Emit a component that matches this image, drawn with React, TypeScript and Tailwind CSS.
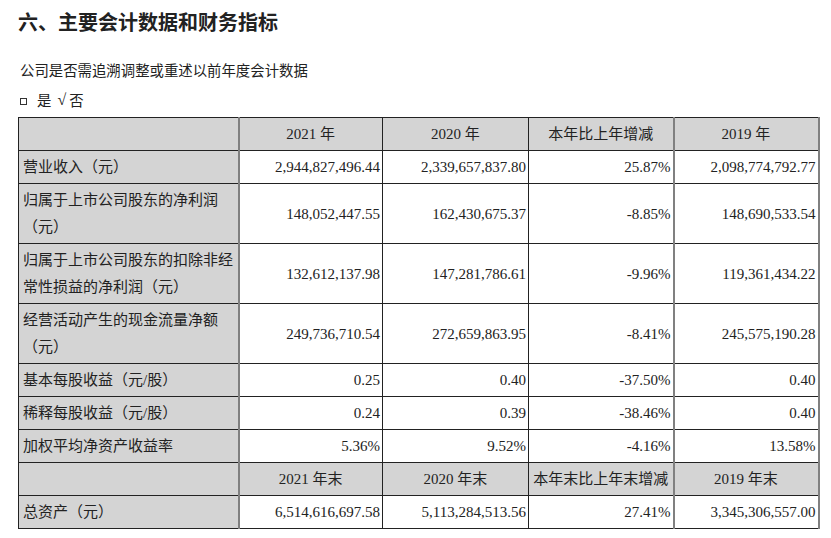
import React from "react";

type Row = {
    label: React.ReactNode
    values: string[]
    tall?: boolean
    header?: boolean
}

const rows: Row[] = [
    { label: "", values: ["2021 年", "2020 年", "本年比上年增减", "2019 年"], header: true },
    { label: "营业收入（元）", values: ["2,944,827,496.44", "2,339,657,837.80", "25.87%", "2,098,774,792.77"] },
    {
        label: <>归属于上市公司股东的净利润<br />（元）</>,
        values: ["148,052,447.55", "162,430,675.37", "-8.85%", "148,690,533.54"],
        tall: true,
    },
    {
        label: <>归属于上市公司股东的扣除非经<br />常性损益的净利润（元）</>,
        values: ["132,612,137.98", "147,281,786.61", "-9.96%", "119,361,434.22"],
        tall: true,
    },
    {
        label: <>经营活动产生的现金流量净额<br />（元）</>,
        values: ["249,736,710.54", "272,659,863.95", "-8.41%", "245,575,190.28"],
        tall: true,
    },
    { label: "基本每股收益（元/股）", values: ["0.25", "0.40", "-37.50%", "0.40"] },
    { label: "稀释每股收益（元/股）", values: ["0.24", "0.39", "-38.46%", "0.40"] },
    { label: "加权平均净资产收益率", values: ["5.36%", "9.52%", "-4.16%", "13.58%"] },
    { label: "", values: ["2021 年末", "2020 年末", "本年末比上年末增减", "2019 年末"], header: true },
    { label: "总资产（元）", values: ["6,514,616,697.58", "5,113,284,513.56", "27.41%", "3,345,306,557.00"] },
]

// which columns get the grey, heavier right rule
const greyRight = [true, false, false, true, true]

export default function App() {
    return (
        <div className="w-[831px] h-[538px] bg-white pl-[18px] text-[#222] font-['Liberation_Serif','Noto_Sans_CJK_SC',serif]">
            <h1 className="pt-[8px] text-[20px] leading-[28px] font-bold font-['Noto_Sans_CJK_SC',sans-serif]">
                六、主要会计数据和财务指标
            </h1>
            <p className="mt-[24px] pl-[2px] text-[14.4px] leading-[20px] font-['Noto_Sans_CJK_SC',sans-serif]">
                公司是否需追溯调整或重述以前年度会计数据
            </p>
            {/* 是 / 否 勾选 */}
            <div className="mt-[10px] pl-[2px] h-[20px] flex items-center text-[14.4px] font-['Noto_Sans_CJK_SC',sans-serif]">
                <span className="w-[7px] h-[7px] mt-[3px] border border-[#333]" />
                <span className="ml-[10px]">是</span>
                <span className="ml-[6px] text-[16px] leading-[20px] font-['Liberation_Serif',serif]">√</span>
                <span className="ml-[3px]">否</span>
            </div>

            {/* 财务指标表 */}
            <table className="mt-[7px] w-[800px] table-fixed border-collapse text-[15px]">
                <colgroup>
                    <col className="w-[220px]" />
                    <col className="w-[144px]" />
                    <col className="w-[146px]" />
                    <col className="w-[145px]" />
                    <col className="w-[145px]" />
                </colgroup>
                <tbody>
                    {rows.map((row, i) => (
                        <tr key={i} className={row.tall ? "h-[60px]" : "h-[33px]"}>
                            <td
                                className={`bg-[#d4d4d4] border border-[#222] px-[4px] align-middle whitespace-nowrap leading-[27px] ${greyRight[0] ? "border-r-2 border-r-[#808080]" : ""}`}
                            >
                                {row.label}
                            </td>
                            {row.values.map((v, j) => (
                                <td
                                    key={j}
                                    className={`border border-[#222] align-middle whitespace-nowrap leading-[20px] ${
                                        row.header ? "bg-[#d4d4d4] text-center" : "text-right pr-[2px]"
                                    } ${greyRight[j + 1] ? "border-r-2 border-r-[#808080]" : ""}`}
                                >
                                    {v}
                                </td>
                            ))}
                        </tr>
                    ))}
                </tbody>
            </table>
        </div>
    );
}
